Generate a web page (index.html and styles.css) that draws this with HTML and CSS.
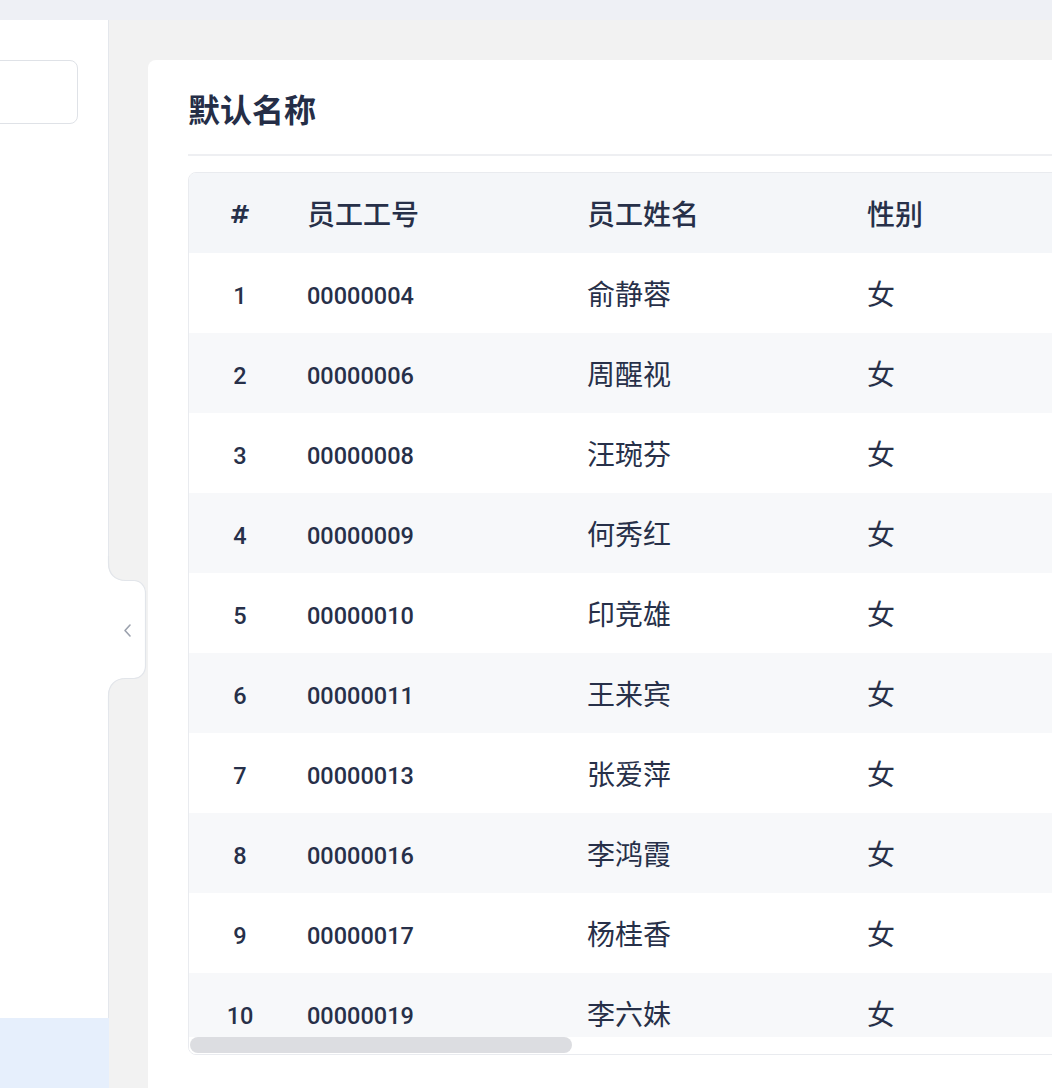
FILE: index.html
```html
<!DOCTYPE html>
<html lang="zh-CN">
<head>
<meta charset="utf-8">
<title>默认名称</title>
<link rel="stylesheet" href="styles.css">
</head>
<body>
<div class="topbar"></div>
<div class="main">
  <aside class="sidebar">
    <div class="search"></div>
    <div class="spacer"></div>
    <div class="active-item"></div>
    <svg class="collapse-handle" width="50" height="160" viewBox="100 550 50 160" aria-hidden="true">
      <path class="handle-fill" d="M100,556 L108,556 L108,563 C108,574 115,581 126,581 L134,581 C140.6,581 146,586.4 146,593 L146,666 C146,672.6 140.6,678 134,678 L126,678 C115,678 108,685 108,696 L108,710 L100,710 Z"/>
      <path class="handle-line" d="M108.5,556 L108.5,563 C108.5,574 115,580.5 126,580.5 L134,580.5 C140.6,580.5 145.5,586.4 145.5,593 L145.5,666 C145.5,672.6 140.6,678.5 134,678.5 L126,678.5 C115,678.5 108.5,685 108.5,696 L108.5,710"/>
      <path class="handle-chevron" d="M130,625 L125,630.5 L130,636"/>
    </svg>
  </aside>
  <section class="content">
    <div class="card">
      <h1 class="card-title">默认名称</h1>
      <div class="divider"></div>
      <div class="table">
        <div class="table-viewport">
          <div class="row head">
            <div class="cell idx hash">#</div>
            <div class="cell">员工工号</div>
            <div class="cell">员工姓名</div>
            <div class="cell">性别</div>
            <div class="cell"></div>
          </div>
          <div class="row">
            <div class="cell idx num">1</div>
            <div class="cell num">00000004</div>
            <div class="cell">俞静蓉</div>
            <div class="cell">女</div>
            <div class="cell"></div>
          </div>
          <div class="row">
            <div class="cell idx num">2</div>
            <div class="cell num">00000006</div>
            <div class="cell">周醒视</div>
            <div class="cell">女</div>
            <div class="cell"></div>
          </div>
          <div class="row">
            <div class="cell idx num">3</div>
            <div class="cell num">00000008</div>
            <div class="cell">汪琬芬</div>
            <div class="cell">女</div>
            <div class="cell"></div>
          </div>
          <div class="row">
            <div class="cell idx num">4</div>
            <div class="cell num">00000009</div>
            <div class="cell">何秀红</div>
            <div class="cell">女</div>
            <div class="cell"></div>
          </div>
          <div class="row">
            <div class="cell idx num">5</div>
            <div class="cell num">00000010</div>
            <div class="cell">印竞雄</div>
            <div class="cell">女</div>
            <div class="cell"></div>
          </div>
          <div class="row">
            <div class="cell idx num">6</div>
            <div class="cell num">00000011</div>
            <div class="cell">王来宾</div>
            <div class="cell">女</div>
            <div class="cell"></div>
          </div>
          <div class="row">
            <div class="cell idx num">7</div>
            <div class="cell num">00000013</div>
            <div class="cell">张爱萍</div>
            <div class="cell">女</div>
            <div class="cell"></div>
          </div>
          <div class="row">
            <div class="cell idx num">8</div>
            <div class="cell num">00000016</div>
            <div class="cell">李鸿霞</div>
            <div class="cell">女</div>
            <div class="cell"></div>
          </div>
          <div class="row">
            <div class="cell idx num">9</div>
            <div class="cell num">00000017</div>
            <div class="cell">杨桂香</div>
            <div class="cell">女</div>
            <div class="cell"></div>
          </div>
          <div class="row">
            <div class="cell idx num">10</div>
            <div class="cell num">00000019</div>
            <div class="cell">李六妹</div>
            <div class="cell">女</div>
            <div class="cell"></div>
          </div>
        </div>
        <div class="hscroll"><div class="thumb"></div></div>
      </div>
    </div>
  </section>
</div>
</body>
</html>
```
FILE: styles.css
```css
html, body {
  margin: 0;
  padding: 0;
  width: 100%;
  height: 100%;
  overflow: hidden;
}
body {
  font-family: "Noto Sans CJK SC", "Noto Sans", sans-serif;
  color: #273049;
  background: #f2f2f2;
}
.topbar {
  height: 20px;
  background: #eef0f5;
}
.main {
  display: flex;
  height: 1068px;
}
.sidebar {
  position: relative;
  width: 109px;
  flex-shrink: 0;
  box-sizing: border-box;
  background: #ffffff;
  border-right: 1px solid #e4e7ec;
  display: flex;
  flex-direction: column;
}
.search {
  margin-top: 40px;
  margin-left: -40px;
  width: 118px;
  height: 64px;
  box-sizing: border-box;
  border: 1.5px solid #dfe2e7;
  border-radius: 8px;
  background: #ffffff;
}
.spacer {
  flex: 1;
}
.active-item {
  height: 70px;
  background: #e6effc;
  margin-right: -1px;
}
.collapse-handle {
  position: absolute;
  left: 100px;
  top: 530px;
  z-index: 2;
  overflow: visible;
}
.handle-fill {
  fill: #ffffff;
}
.handle-line {
  fill: none;
  stroke: #e2e5ea;
  stroke-width: 1.2;
}
.handle-chevron {
  fill: none;
  stroke: #9ba1ad;
  stroke-width: 1.6;
  stroke-linecap: round;
  stroke-linejoin: round;
}
.content {
  flex: 1;
  overflow: hidden;
  padding: 40px 0 0 39px;
  background: #f2f2f2;
  display: flex;
  align-items: flex-start;
}
.card {
  flex-shrink: 0;
  width: 1100px;
  height: 1100px;
  box-sizing: border-box;
  background: #ffffff;
  border-radius: 8px;
  padding: 24px 0 0 40px;
}
.card-title {
  margin: 0;
  font-size: 32px;
  line-height: 48px;
  font-weight: 700;
  color: #252e47;
}
.divider {
  margin-top: 22px;
  height: 2px;
  background: #eeeff2;
}
.table {
  margin-top: 16px;
  border: 1px solid #e9ebef;
  border-radius: 8px;
  overflow: hidden;
}
.table-viewport {
  height: 864px;
  overflow: hidden;
}
.row {
  display: grid;
  grid-template-columns: 102px 280px 280px 280px 1fr;
  height: 80px;
  align-items: center;
  font-size: 28px;
  line-height: 40px;
  background: #ffffff;
}
.row:nth-child(odd) {
  background: #f7f8fa;
}
.row.head {
  background: #f4f6f9;
  font-weight: 500;
}
.cell {
  padding-left: 16px;
  white-space: nowrap;
}
.cell.idx {
  padding-left: 0;
  text-align: center;
}
.num {
  font-family: Roboto, "Liberation Sans", sans-serif;
  font-size: 23.5px;
  font-weight: 500;
  padding-top: 6px;
}
.hash {
  font-family: "DejaVu Sans", sans-serif;
  font-size: 25px;
  font-weight: 700;
  padding-top: 4px;
}
.hscroll {
  height: 17px;
  background: #ffffff;
  padding-left: 1px;
}
.thumb {
  width: 382px;
  height: 16px;
  border-radius: 8px;
  background: #dcdde1;
}
```
